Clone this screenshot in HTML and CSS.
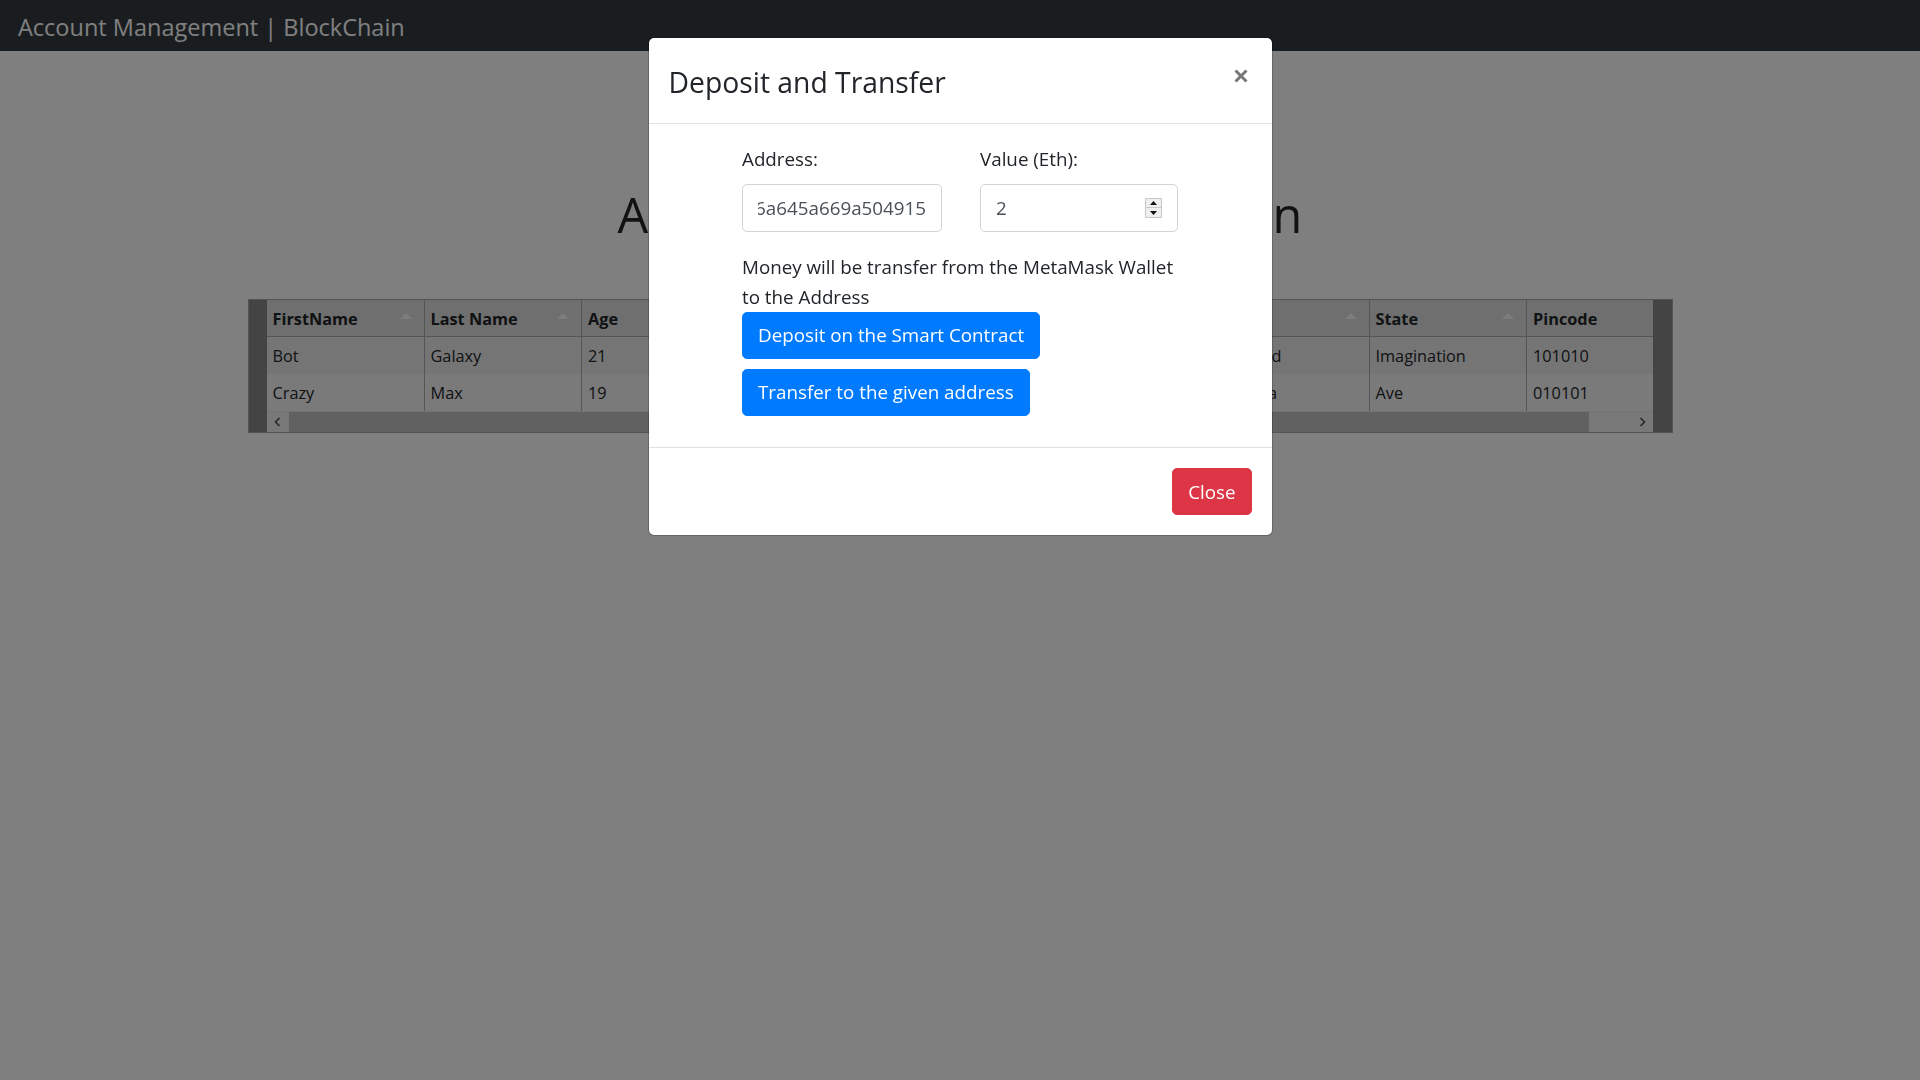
FILE: index.html
```html
<!DOCTYPE html>
<html lang="en">
<head>
<meta charset="utf-8">
<title>Account Management | BlockChain</title>
<link rel="stylesheet" href="styles.css">
</head>
<body>
<nav class="navbar">
  <a class="brand" href="#">Account Management | BlockChain</a>
</nav>

<main class="page">
  <h1 class="page-title">Account Details on BlockChain</h1>
  <div class="table-frame">
    <div class="table-scroll">
      <table class="accounts">
        <thead>
          <tr>
            <th>FirstName</th><th>Last Name</th><th>Age</th><th>Phone</th><th>Email</th><th>Address</th><th>City</th><th>State</th><th class="last">Pincode</th>
          </tr>
        </thead>
        <tbody>
          <tr class="odd">
            <td>Bot</td><td>Galaxy</td><td>21</td><td>9876543210</td><td>bot@galaxy.io</td><td>Milky Way</td><td>Oakland</td><td>Imagination</td><td class="last">101010</td>
          </tr>
          <tr class="even">
            <td>Crazy</td><td>Max</td><td>19</td><td>9123456780</td><td>max@crazy.io</td><td>Road 7</td><td>Valhalla</td><td>Ave</td><td class="last">010101</td>
          </tr>
        </tbody>
      </table>
    </div>
    <div class="hscroll">
      <span class="sb-btn"><svg width="7" height="10" viewBox="0 0 7 10"><path d="M5.5 1 L1.5 5 L5.5 9" fill="none" stroke="#505050" stroke-width="1.6"/></svg></span>
      <span class="sb-track"><span class="sb-thumb"></span></span>
      <span class="sb-btn"><svg width="7" height="10" viewBox="0 0 7 10"><path d="M1.5 1 L5.5 5 L1.5 9" fill="none" stroke="#505050" stroke-width="1.6"/></svg></span>
    </div>
  </div>
</main>

<div class="backdrop"></div>

<div class="modal">
  <div class="modal-dialog">
    <div class="modal-content">
      <div class="modal-header">
        <h4 class="modal-title">Deposit and Transfer</h4>
        <button class="close" type="button" aria-label="Close">
          <svg width="14" height="14" viewBox="0 0 14 14"><path d="M1.5 1.5 L12.5 12.5 M12.5 1.5 L1.5 12.5" stroke="#777" stroke-width="3" fill="none"/></svg>
        </button>
      </div>
      <div class="modal-body">
        <div class="transfer-form">
          <div class="fields">
            <div class="field field-address">
              <label>Address:</label>
              <div class="input">
                <span class="addr-clip"><span class="addr-text">0x4b1e9c07f3d26a645a669a504915</span></span>
              </div>
            </div>
            <div class="field field-value">
              <label>Value (Eth):</label>
              <div class="input input-number">
                <span class="num">2</span>
                <span class="spin">
                  <span class="spin-btn"><svg width="7" height="4" viewBox="0 0 7 4"><path d="M0 4 L3.5 0 L7 4 Z" fill="#111"/></svg></span>
                  <span class="spin-btn"><svg width="7" height="4" viewBox="0 0 7 4"><path d="M0 0 L3.5 4 L7 0 Z" fill="#111"/></svg></span>
                </span>
              </div>
            </div>
          </div>
          <p class="note">Money will be transfer from the MetaMask Wallet to the Address</p>
          <div class="actions">
            <button class="btn btn-primary" type="button">Deposit on the Smart Contract</button>
            <button class="btn btn-primary" type="button">Transfer to the given address</button>
          </div>
        </div>
      </div>
      <div class="modal-footer">
        <button class="btn btn-danger" type="button">Close</button>
      </div>
    </div>
  </div>
</div>
</body>
</html>
```

FILE: styles.css
```css
html, body {
  margin: 0;
  padding: 0;
}

body {
  font-family: "Open Sans", "Noto Sans", sans-serif;
  font-size: 18.8px;
  line-height: 30px;
  color: #212529;
  background: #fff;
  width: 1920px;
  height: 1080px;
  overflow: hidden;
}

/* Navbar */
.navbar {
  background: #343a40;
  height: 51px;
  padding: 5px 18px 0;
  display: flex;
  align-items: center;
  box-sizing: border-box;
}

.brand {
  color: #fff;
  font-size: 23.5px;
  line-height: 37.5px;
  text-decoration: none;
}

/* Page */
.page-title {
  margin: 133px 0 55px;
  text-align: center;
  font-size: 48.5px;
  line-height: 60px;
  font-weight: 400;
}

.table-frame {
  width: 1425px;
  margin: 0 auto;
  box-sizing: border-box;
  border: 1px solid #a8a8a8;
  background: #888;
  padding: 0 19px 0 18px;
}

.table-scroll {
  overflow: hidden;
  background: #fff;
}

.accounts {
  table-layout: fixed;
  width: 1420px;
  border-collapse: collapse;
  font-size: 16.3px;
  line-height: 26px;
  color: #212529;
}

.accounts th,
.accounts td {
  width: 157.5px;
  padding: 5.5px 6px;
  text-align: left;
  border-right: 1px solid #aaa;
  white-space: nowrap;
  overflow: hidden;
  box-sizing: border-box;
}

.accounts th.last,
.accounts td.last {
  width: 160px;
}

.accounts th {
  background: #dedede;
  font-weight: 700;
  padding: 5.5px 6px 4.5px;
  border-bottom: 1px solid #a8a8a8;
  position: relative;
}

.accounts th::after {
  content: "";
  position: absolute;
  right: 12px;
  top: 13px;
  border-left: 6px solid transparent;
  border-right: 6px solid transparent;
  border-bottom: 6px solid #fafafa;
}

.accounts th.last::after {
  right: 20px;
}

.accounts tr.odd td {
  background: #ebebeb;
}

.accounts tr.even td {
  background: #f4f4f4;
}

.hscroll {
  display: flex;
  height: 20px;
  background: #f1f1f1;
  border-top: 1px solid #e6e6e6;
}

.sb-btn {
  width: 21px;
  flex: 0 0 21px;
  display: flex;
  align-items: center;
  justify-content: center;
}

.sb-track {
  flex: 1;
  display: flex;
  padding-left: 1px;
}

.sb-thumb {
  width: 1300px;
  background: #c3c3c3;
}

/* Modal */
.backdrop {
  position: fixed;
  inset: 0;
  background: rgba(0, 0, 0, 0.5);
}

.modal {
  position: fixed;
  inset: 0;
}

.modal-dialog {
  width: 625px;
  margin: 37px auto 0;
}

.modal-content {
  background: #fff;
  border: 1px solid rgba(0, 0, 0, 0.2);
  border-radius: 6px;
  background-clip: padding-box;
}

.modal-header {
  display: flex;
  align-items: flex-start;
  padding: 20px;
  border-bottom: 1px solid #dee2e6;
}

.modal-title {
  margin: 0 0 -2px;
  padding-top: 2px;
  font-size: 28.3px;
  line-height: 45px;
  font-weight: 400;
  color: #212529;
}

.close {
  margin: -20px -20px -20px auto;
  padding: 30.5px 23.5px 20px 20px;
  background: transparent;
  border: 0;
  cursor: pointer;
}

.close svg {
  display: block;
}

.modal-body {
  padding: 20px;
}

.transfer-form {
  width: 436px;
  margin: 0 auto;
}

.fields {
  display: flex;
  justify-content: space-between;
  margin-bottom: 20px;
}

.field-address {
  width: 200px;
}

.field-value {
  width: 198px;
}

.field label {
  display: block;
  margin-bottom: 10px;
}

.input {
  height: 47.5px;
  box-sizing: border-box;
  border: 1px solid #ced4da;
  border-radius: 5px;
  padding: 7.5px 15px;
  color: #495057;
  display: flex;
  align-items: center;
}

.addr-clip {
  display: flex;
  justify-content: flex-end;
  overflow: hidden;
  white-space: nowrap;
  width: 100%;
}

.addr-text {
  flex: 0 0 auto;
}

.input-number {
  justify-content: space-between;
}

.spin {
  display: flex;
  flex-direction: column;
  width: 17px;
  height: 20px;
  border: 1px solid #c9c9c9;
  box-sizing: border-box;
  background: #efefef;
}

.spin-btn {
  flex: 1;
  display: flex;
  align-items: center;
  justify-content: center;
}

.spin-btn + .spin-btn {
  border-top: 1px solid #c9c9c9;
}

.note {
  margin: 0;
}

.actions {
  display: flex;
  flex-direction: column;
  align-items: flex-start;
  gap: 10px;
  padding-bottom: 11.5px;
}

.btn {
  font-family: inherit;
  font-size: 18.8px;
  line-height: 30px;
  padding: 7.5px 15px;
  border: 1px solid transparent;
  border-radius: 5px;
  color: #fff;
  cursor: pointer;
}

.btn-primary {
  background: #007bff;
  border-color: #007bff;
}

.btn-danger {
  background: #dc3545;
  border-color: #dc3545;
  margin: 5px;
}

.modal-footer {
  display: flex;
  justify-content: flex-end;
  padding: 15px;
  border-top: 1px solid #dee2e6;
}
```
